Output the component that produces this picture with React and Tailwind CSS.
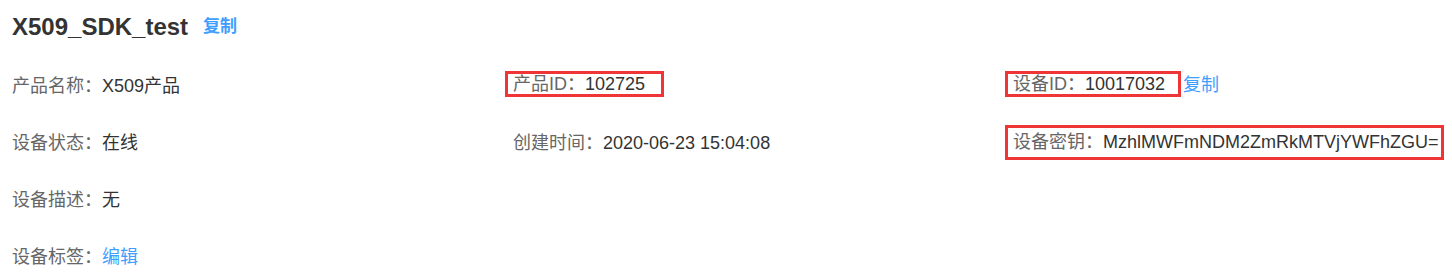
import React from 'react';

const font = { fontFamily: '"Liberation Sans", "Noto Sans CJK SC", sans-serif' };

// red marker rectangle drawn around a field
const Marked = ({ className, children }) => (
  <div
    className={`-ml-[8px] flex items-center border-[3px] border-[#ef3535] pl-[5px] ${className}`}
  >
    {children}
  </div>
);

const Field = ({ label, children }) => (
  <span className="whitespace-nowrap">
    <span className="text-[#666]">{label}：</span>
    <span className="text-[#333]">{children}</span>
  </span>
);

const App = () => {
  return (
    <div className="w-[1452px] h-[274px] bg-white px-3 text-[18px]" style={font}>
      {/* Title */}
      <div className="flex h-[58px] items-center pb-[4px]">
        <h1 className="text-[24px] font-bold text-[#333]">X509_SDK_test</h1>
        <a className="ml-[15px] cursor-pointer text-[17px] font-bold text-[#409eff]">复制</a>
      </div>

      <div className="grid grid-cols-[501px_500px_1fr]">
        {/* row 1 */}
        <div className="flex h-[57px] items-center">
          <Field label="产品名称">X509产品</Field>
        </div>
        <div className="flex h-[57px] items-center">
          <Marked className="mb-[5px] h-[26px] w-[159px]">
            <Field label="产品ID">102725</Field>
          </Marked>
        </div>
        <div className="flex h-[57px] items-center">
          <Marked className="mb-[5px] h-[26px] w-[176px]">
            <Field label="设备ID">10017032</Field>
          </Marked>
          <a className="mb-[3px] ml-[2px] cursor-pointer text-[#409eff]">复制</a>
        </div>

        {/* row 2 */}
        <div className="flex h-[57px] items-center">
          <Field label="设备状态">在线</Field>
        </div>
        <div className="flex h-[57px] items-center">
          <Field label="创建时间">2020-06-23 15:04:08</Field>
        </div>
        <div className="flex h-[57px] items-center">
          <Marked className="mb-[2px] h-[35px] w-[439px]">
            <Field label="设备密钥">MzhlMWFmNDM2ZmRkMTVjYWFhZGU=</Field>
          </Marked>
        </div>

        {/* row 3 */}
        <div className="col-span-3 flex h-[57px] items-center">
          <Field label="设备描述">无</Field>
        </div>

        {/* row 4 */}
        <div className="col-span-3 flex h-[57px] items-center">
          <span className="text-[#666]">设备标签：</span>
          <a className="cursor-pointer text-[#409eff]">编辑</a>
        </div>
      </div>
    </div>
  );
};

export default App;
